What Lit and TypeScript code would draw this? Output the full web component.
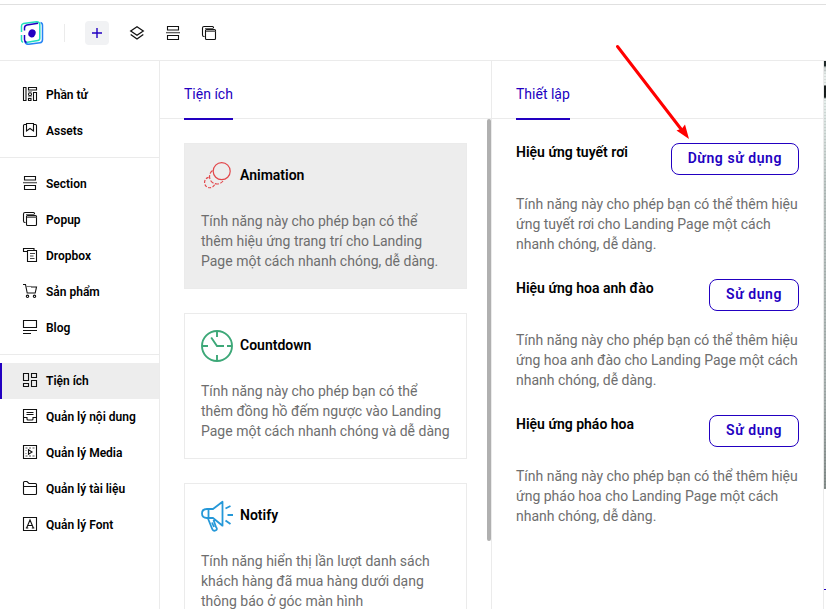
import { LitElement, html, svg, css } from "lit";
import { customElement, property } from "lit/decorators.js";

const icons: Record<string, any> = {
  elements: svg`<path d="M.5 .5h2.500v13H.5zM5.500 .5h8v2.500h-8zM10.500 5.500h3v8h-3zM5.500 11.500h2.500v2H5.500z"/><circle cx="7" cy="7.200" r="1.500"/><path d="M5 4.800h4M5 9.800h4" opacity=".5"/>`,
  assets: svg`<path d="M3 1.500H1.500Q.5 1.500 .5 2.500v10q0 1 1 1h11q1 0 1-1v-10q0-1-1-1H11M3.500 .5h7v7.500L7 5.500 3.500 8z"/>`,
  section: svg`<path d="M1.500 .5h11v3.500h-11zM1.500 9.500h11v4h-11z"/><path d="M0 6.500h14" stroke="#555"/><path d="M0 7.300h14" stroke="#aaa" stroke-width=".7"/>`,
  popup: svg`<path d="M2.500 10.500H2Q.5 10.500 .5 9V2Q.5 .5 2 .5h8.500q1 0 1 1V2M4.500 3.500h8q1 0 1 1v8q0 1-1 1h-8q-1 0-1-1v-8q0-1 1-1z"/><path d="M3 2.500h8.500M4 5.500h9.500" stroke="#666"/><path d="M4 4.500h9" stroke="#999"/>`,
  dropbox: svg`<path d="M4 3.500H.5v-3h10.500V2M4.500 2.500h9v11h-9z"/><path d="M7 5.500h5M7 8h3.500M7 10.500h4.500" stroke="#444"/>`,
  cart: svg`<path d="M0 .5h2.500l1.700 8.500h8l1.300-6H8"/><path d="M3 2.500h6" stroke="#777"/><circle cx="4.500" cy="12.300" r="1.200"/><circle cx="11.500" cy="12.300" r="1.200"/>`,
  blog: svg`<path d="M.5 .5h13v7H.5zM0 10.500h14M0 13.500h8"/>`,
  widgets: svg`<path d="M.5 .5h5v7h-5zM8.500 .5h5v4h-5zM.5 10.500h5v3h-5zM8.500 7.500h5v6h-5z"/>`,
  content: svg`<path d="M.5 .5h13v13H.5zM3.500 3.500h7M3.500 5.500h7M.5 8.500H4v1.500q0 1 1 1h4q1 0 1-1V8.500h3.500"/>`,
  media: svg`<path d="M.5 .5h13v13H.5z"/><path d="M5.500 4.800v4.400L9 7z"/><path d="M2.500 3h9M2.500 11h9" stroke-dasharray="2 1.500" stroke="#555"/><path d="M3 5v4.500" stroke-dasharray="1 2" stroke="#777"/>`,
  folder: svg`<path d="M.5 12V1.500q0-1 1-1H4L6 2.500h6.500q1 0 1 1V12.500q0 1-1 1h-11q-1 0-1-1zM.5 5.500h13"/>`,
  font: svg`<path d="M.5 .5h13v13H.5zM3.600 11 7 3l3.400 8M4.800 8.500h4.400M2.800 11h2.500M8.800 11h2.500"/>`,
  layers: svg`<path d="M7 .7 13.300 5 7 9.300.700 5zM.700 8.500 7 13.100 13.300 8.500" stroke-width="1.250"/>`,
};

@customElement("line-icon")
class LineIcon extends LitElement {
  @property() name = "";
  static styles = css`
    :host { display: block; width: 14px; height: 14px; flex: none; }
    svg { display: block; overflow: visible; }
  `;
  render() {
    return html`<svg width="14" height="14" viewBox="0 0 14 14" fill="none" stroke="#111" stroke-width="1.1">${icons[this.name]}</svg>`;
  }
}

const menu = [
  [["elements", "Phần tử"], ["assets", "Assets"]],
  [["section", "Section"], ["popup", "Popup"], ["dropbox", "Dropbox"], ["cart", "Sản phẩm"], ["blog", "Blog"]],
  [["widgets", "Tiện ích"], ["content", "Quản lý nội dung"], ["media", "Quản lý Media"], ["folder", "Quản lý tài liệu"], ["font", "Quản lý Font"]],
];

const cards = [
  {
    title: "Animation",
    lines: ["Tính năng này cho phép bạn có thể", "thêm hiệu ứng trang trí cho Landing", "Page một cách nhanh chóng, dễ dàng."],
    icon: svg`<g fill="none" stroke="#e2474b" stroke-width="1.200"><circle cx="20.700" cy="11.200" r="8.500"/><path d="M11.500 10.500a7.500 7.500 0 1 0 10.500 10.500" stroke-dasharray="4 1.500"/><path d="M7.600 17.300a5.300 5.300 0 1 0 6 7.500" stroke-dasharray="3 1.500"/></g>`,
  },
  {
    title: "Countdown",
    lines: ["Tính năng này cho phép bạn có thể", "thêm đồng hồ đếm ngược vào Landing", "Page một cách nhanh chóng và dễ dàng"],
    icon: svg`<g fill="none" stroke="#3da878" stroke-width="1.900"><circle cx="16" cy="16" r="15"/><path d="M16 1v6M16 25v6M1 16h6M26 16h5M10.200 7.500 16 16h7"/></g>`,
  },
  {
    title: "Notify",
    lines: ["Tính năng hiển thị lần lượt danh sách", "khách hàng đã mua hàng dưới dạng", "thông báo ở góc màn hình"],
    icon: svg`<g fill="none" stroke="#2598d8" stroke-width="1.800" stroke-linejoin="round"><path d="M6 9h6L21.500 1.700v24L12 18H6Q1 18 1 13.500T6 9zM7.500 9v9M7 18.500l4 10q1 3 3.500 2t.5-3.500l-2.500-7M11 22.500l2 4.500M24.500 8.500 29.500 6M26.500 15H32M24.500 20.500l5 3.500"/></g>`,
  },
];

const settings = [
  { title: "Hiệu ứng tuyết rơi", action: "Dừng sử dụng", lines: ["Tính năng này cho phép bạn có thể thêm hiệu", "ứng tuyết rơi cho Landing Page một cách", "nhanh chóng, dễ dàng."] },
  { title: "Hiệu ứng hoa anh đào", action: "Sử dụng", lines: ["Tính năng này cho phép bạn có thể thêm hiệu", "ứng hoa anh đào cho Landing Page một cách", "nhanh chóng, dễ dàng."] },
  { title: "Hiệu ứng pháo hoa", action: "Sử dụng", lines: ["Tính năng này cho phép bạn có thể thêm hiệu", "ứng pháo hoa cho Landing Page một cách", "nhanh chóng, dễ dàng."] },
];

@customElement("app-root")
class AppRoot extends LitElement {
  static styles = css`
    :host { display: flex; flex-direction: column; position: relative; width: 826px; height: 609px; overflow: hidden; background: #fff; color: #000; font: 14px/20px Roboto, sans-serif; }
    * { box-sizing: border-box; }
    svg { display: block; }
    .header { flex: none; height: 61px; border-bottom: 1px solid #ebebeb; padding-top: 4px; }
    .bar { height: 56px; border-top: 1px solid #e0e0e0; display: flex; align-items: center; padding-left: 20px; }
    .sep { width: 1px; height: 18px; background: #ebebeb; margin: 0 20px; }
    .add { width: 24px; height: 24px; border-radius: 4px; background: #f1f2f4; display: grid; place-items: center; margin-right: 21px; }
    .tools { display: flex; gap: 22px; }
    .main { flex: 1; min-height: 0; display: flex; }
    .side { width: 160px; border-right: 1px solid #ebebeb; padding-top: 16px; flex: none; }
    .group + .group { border-top: 1px solid #ebebeb; margin-top: 8px; padding-top: 8px; }
    .item { height: 36px; display: flex; align-items: center; gap: 9px; padding-left: 23px; font-size: 12px; font-weight: 600; white-space: nowrap; }
    .item line-icon { margin-top: -2px; }
    .item.active { background: #ededed; border-left: 2px solid #2200c1; padding-left: 21px; }
    .panel { width: 332px; border-right: 1px solid #ebebeb; flex: none; position: relative; display: flex; flex-direction: column; }
    .tabs { flex: none; height: 58px; border-bottom: 1px solid #ebebeb; padding-left: 24px; display: flex; }
    .tab { height: 59px; border-bottom: 2px solid #2200c1; color: #2200c1; padding-top: 23px; white-space: nowrap; }
    .body { padding: 24px; display: flex; flex-direction: column; gap: 24px; min-height: 0; overflow: hidden; }
    .thumb { position: absolute; right: 0; top: 58px; width: 4px; height: 422px; border-radius: 2px; background: #b0b0b0; }
    .card { flex: none; width: 283px; height: 146px; border: 1px solid #ebebeb; padding: 16px; }
    .card.active { background: #ededed; }
    .head { display: flex; align-items: center; gap: 7px; height: 32px; margin-bottom: 19px; }
    .title { font-weight: 600; white-space: nowrap; }
    .head .title { margin-top: -2px; }
    .desc { color: #6e6e6e; white-space: nowrap; }
    .setting { height: 112px; flex: none; }
    .row { display: flex; justify-content: space-between; width: 283px; height: 51px; }
    .row .title { margin-top: -1px; }
    .button { height: 32px; border: 1px solid #2200c1; border-radius: 8px; padding: 4px 16px; color: #2200c1; font-weight: 600; letter-spacing: .56px; white-space: nowrap; }
    .canvas { flex: 1; display: flex; flex-direction: column; }
    .photo { height: 428px; background: repeating-linear-gradient(rgba(0,0,0,.08) 0 1px, transparent 1px 3px), linear-gradient(#202b2a 0 5px, #cdd4d3 6px 9px, #e8eeec 13px 24px, #181d1c 25px 36px, #e5eeeb 38px, #b9c3c1 130px, #a8b1b0 330px, #858e8c); }
    .edge { height: 1px; margin-top: 100px; background: #2200c1; }
    .arrow { position: absolute; left: 0; top: 0; pointer-events: none; }
  `;

  render() {
    return html`
      <div class="header"><div class="bar">
        <svg width="24" height="24" viewBox="0 0 24 24" fill="none" stroke-width="1.5">
          <path d="M20.500 1.500q2 .5 2 3v14q0 3-2.500 3.300L8.500 23.300q-3 0-3.500-3" stroke="#2584f4"/>
          <path d="M1.500 11V5q0-2 2-2.500L16.500 .8q3.300 0 3.300 3v13.500q0 2-2 2.300L6 21.500" stroke="#20dfbd"/>
          <path d="M1.500 14v5q0 1.500 1.500 2.500" stroke="#20dfbd"/>
          <path d="M4.500 9.500V7q0-2.500 2.500-3l11-1.800M4.500 14v4.500q0 2 2 3" stroke="#2200c1"/>
          <ellipse cx="12" cy="12.300" rx="3.600" ry="4.100" fill="#2200c1" transform="rotate(20 12 12.300)"/>
        </svg>
        <div class="sep"></div>
        <div class="add"><svg width="12" height="12" viewBox="0 0 12 12" stroke="#2200c1" stroke-width="1.400"><path d="M6 1v10M1 6h10"/></svg></div>
        <div class="tools"><line-icon name="layers"></line-icon><line-icon name="section"></line-icon><line-icon name="popup"></line-icon></div>
      </div></div>
      <div class="main">
        <div class="side">
          ${menu.map((g) => html`<div class="group">${g.map(([icon, label]) => html`
            <div class="item ${icon === "widgets" ? "active" : ""}"><line-icon name=${icon}></line-icon><span>${label}</span></div>`)}</div>`)}
        </div>
        <div class="panel">
          <div class="tabs"><div class="tab">Tiện ích</div></div>
          <div class="body">
            ${cards.map((c, i) => html`<div class="card ${i === 0 ? "active" : ""}">
              <div class="head"><svg width="32" height="32" viewBox="0 0 32 32">${c.icon}</svg><div class="title">${c.title}</div></div>
              <div class="desc">${c.lines.map((l) => html`<div>${l}</div>`)}</div>
            </div>`)}
          </div>
          <div class="thumb"></div>
        </div>
        <div class="panel">
          <div class="tabs"><div class="tab">Thiết lập</div></div>
          <div class="body">
            ${settings.map((s) => html`<div class="setting">
              <div class="row"><div class="title">${s.title}</div><div class="button">${s.action}</div></div>
              <div class="desc">${s.lines.map((l) => html`<div>${l}</div>`)}</div>
            </div>`)}
          </div>
        </div>
        <div class="canvas"><div class="photo"></div><div class="edge"></div></div>
      </div>
      <svg class="arrow" width="826" height="200"><path d="M617.500 46.500 681 129" stroke="#f00" stroke-width="3" stroke-linecap="round"/><path d="M689 139 676.500 130.500 682 128.500 685 124.500z" fill="#f00"/></svg>
    `;
  }
}
